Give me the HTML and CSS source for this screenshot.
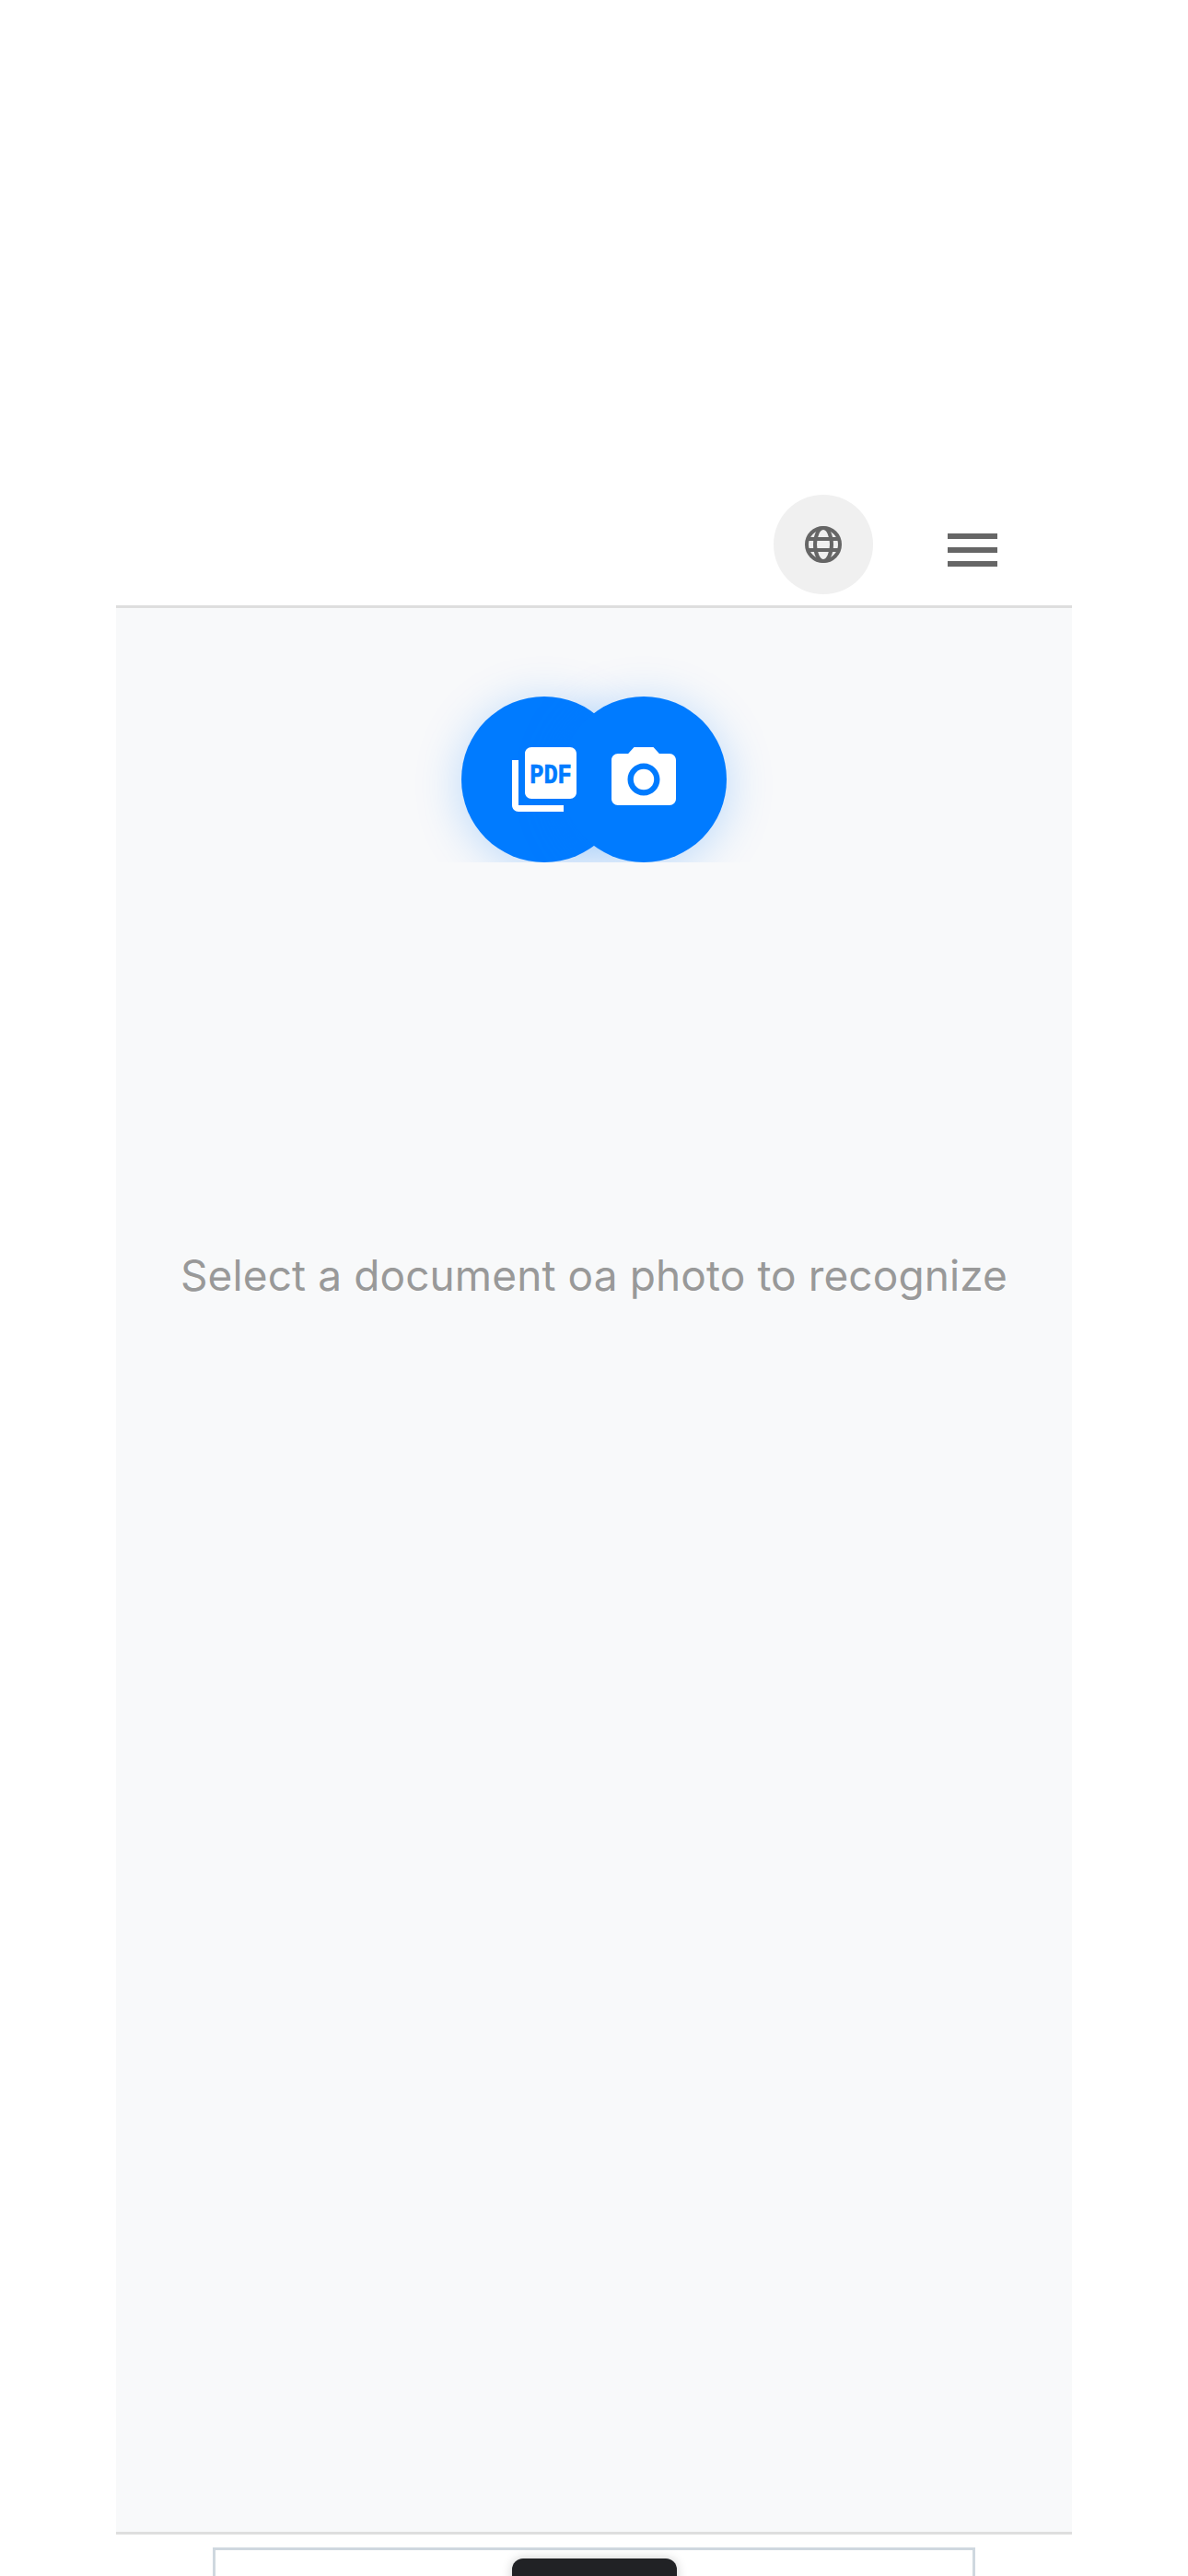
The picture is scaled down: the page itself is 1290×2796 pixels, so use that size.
FILE: index.html
```html
<!DOCTYPE html>
<html lang="en">
<head>
<meta charset="utf-8">
<title>Recognize</title>
<link rel="stylesheet" href="styles.css">
</head>
<body>
<div class="app">
  <header class="header">
    <button class="globe-btn" aria-label="Language">
      <svg class="globe" viewBox="0 0 40 40" fill="none" stroke="#666" stroke-width="4">
        <circle cx="20" cy="20" r="18"/>
        <ellipse cx="20" cy="20" rx="9" ry="18"/>
        <path d="M3 14h34M3 26h34"/>
      </svg>
    </button>
    <button class="menu-btn" aria-label="Menu">
      <span class="bar"></span><span class="bar"></span><span class="bar"></span>
    </button>
  </header>
  <main class="main">
    <div class="stage">
      <button class="action" aria-label="Select a document">
        <svg class="action-icon" viewBox="0 0 24 24">
          <path fill="#fff" d="M8 2h12c1.100 0 2 .9 2 2v12c0 1.100-.9 2-2 2H8c-1.100 0-2-.9-2-2V4c0-1.100.9-2 2-2zM4 6H2v14c0 1.100.9 2 2 2h14v-2H4V6z"/>
          <text class="pdf-text" x="7.500" y="13" textLength="13" lengthAdjust="spacingAndGlyphs">PDF</text>
        </svg>
      </button>
      <button class="action action-second" aria-label="Take a photo">
        <svg class="action-icon" viewBox="0 0 24 24">
          <path fill="#fff" d="M9 2L7.170 4H4c-1.100 0-2 .9-2 2v12c0 1.100.9 2 2 2h16c1.100 0 2-.9 2-2V6c0-1.100-.9-2-2-2h-3.170L15 2H9zm3 15c-2.760 0-5-2.240-5-5s2.240-5 5-5 5 2.240 5 5-2.240 5-5 5z"/>
          <circle fill="#fff" cx="12" cy="12" r="3.200"/>
        </svg>
      </button>
    </div>
    <p class="hint">Select a document oa photo to recognize</p>
  </main>
  <footer class="footer">
    <div class="preview"><div class="sheet"></div></div>
  </footer>
</div>
</body>
</html>
```
FILE: styles.css
```css
* { box-sizing: border-box; }
html, body { margin: 0; padding: 0; background: #fff; }
body { height: 2796px; overflow: hidden; font-family: Inter, "Liberation Sans", Arial, sans-serif; }
button { border: 0; padding: 0; background: none; font: inherit; }

.app { height: 2796px; margin: 0 126px; padding-top: 537px; display: flex; flex-direction: column; }

.header { height: 123px; flex: none; display: flex; justify-content: flex-end; align-items: flex-start; gap: 81px; padding-right: 81px; border-bottom: 3px solid #dedede; }
.globe-btn { width: 108px; height: 108px; border-radius: 50%; background: #f0f0f0; display: flex; align-items: center; justify-content: center; }
.globe { width: 40px; height: 40px; display: block; }
.menu-btn { width: 54px; margin-top: 42px; display: flex; flex-direction: column; gap: 9px; }
.bar { display: block; height: 6px; background: #666; }

.main { flex: 1; min-height: 0; background: #f8f9fa; border-bottom: 3px solid #dedede; }
.stage { height: 276px; padding-top: 96px; display: flex; justify-content: center; overflow: hidden; }
.action { width: 180px; height: 180px; flex: none; border-radius: 50%; background: #007bff; box-shadow: 0 6px 50px rgba(0, 123, 255, 0.25); display: flex; align-items: center; justify-content: center; }
.action-second { margin-left: -72px; }
.action-icon { position: relative; z-index: 1; width: 84px; height: 84px; display: block; }
.pdf-text { font-family: "Liberation Mono", monospace; font-weight: 700; font-size: 8.300px; fill: #007bff; stroke: #007bff; stroke-width: 0.2px; }

.hint { margin: 418px 0 0; text-align: center; font-size: 46px; line-height: 60px; color: #999; letter-spacing: 0.1px; }

.footer { height: 45px; flex: none; padding-top: 14px; overflow: hidden; display: flex; justify-content: center; }
.preview { width: 828px; height: 120px; border: 3px solid #cfd8df; padding-top: 9px; display: flex; justify-content: center; }
.sheet { width: 179px; height: 100px; background: #212225; border-radius: 12px; box-shadow: 0 0 12px rgba(0, 0, 0, 0.2); }
```
